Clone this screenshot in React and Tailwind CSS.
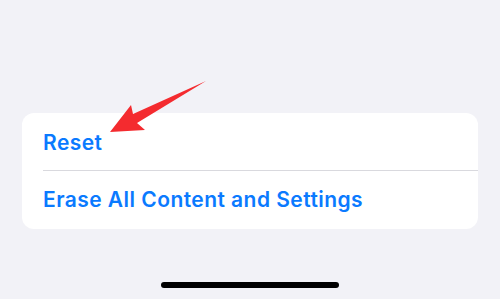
import React from 'react';

const rows = ['Reset', 'Erase All Content and Settings'];

const App = () => {
  return (
    <div className="relative h-[299px] w-[500px] overflow-hidden bg-[#f2f2f7] flex flex-col" style={{ fontFamily: 'Inter, "Noto Sans", sans-serif' }}>
      <div className="mt-[113px] mx-[22px] rounded-[12px] bg-white">
        {rows.map((label, i) => (
          <div key={label} className="pl-[21px]">
            <div className={`h-[58px] flex items-center text-[21px] font-semibold text-[#0a7aff] tracking-[0.45px] ${i === 0 ? 'border-b border-[#d9d9de] pt-[2px]' : ''}`}>
              {label}
            </div>
          </div>
        ))}
      </div>
      <div className="mt-auto mb-[11px] mx-auto h-[6px] w-[178px] rounded-full bg-black" />

      {/* red annotation arrow */}
      <svg className="absolute left-0 top-0" width="500" height="299" viewBox="0 0 500 299">
        <polygon
          points="110,132 131,105 133,114 206,81 137,123 145,130"
          fill="#f42b2f"
        />
      </svg>
    </div>
  );
};

export default App;
